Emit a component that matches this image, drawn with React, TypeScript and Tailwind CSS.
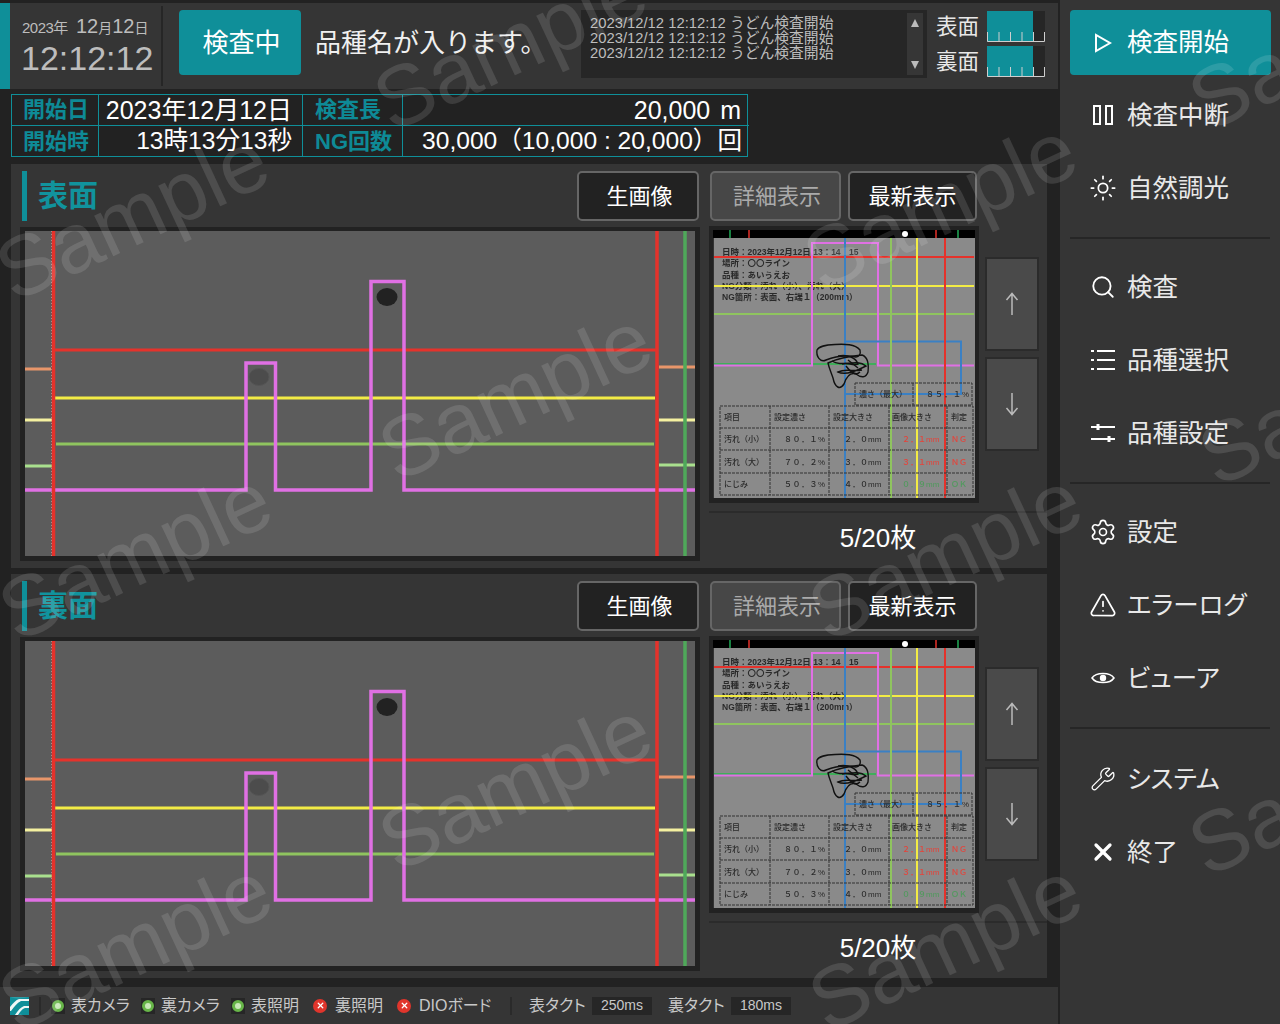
import React from 'react';
import { Sun, Search, Settings, TriangleAlert, Wrench, X } from 'lucide-react';

const watermarks = [
  'left-[132px] top-[215px]',
  'left-[510px] top-[45px]',
  'left-[940px] top-[205px]',
  'left-[515px] top-[395px]',
  'left-[1325px] top-[45px]',
  'left-[135px] top-[555px]',
  'left-[945px] top-[555px]',
  'left-[1335px] top-[400px]',
  'left-[515px] top-[785px]',
  'left-[135px] top-[945px]',
  'left-[945px] top-[945px]',
  'left-[1325px] top-[790px]',
];

const logLines = ['2023/12/12 12:12:12 うどん検査開始', '2023/12/12 12:12:12 うどん検査開始', '2023/12/12 12:12:12 うどん検査開始'];

const Gauge: React.FC<{ label: string }> = ({ label }) => (
  <div className="flex items-center h-[31px]">
    <span className="w-[51px] pt-[3px] text-[21.5px] text-[#e8e8e8] leading-none">{label}</span>
    <div className="relative w-[58px] h-[31px] bg-[#262626]">
      <div className="w-[46px] h-full bg-[#0f8f99]" />
      <svg className="absolute left-0 top-0" width="58" height="31" viewBox="0 0 58 31">
        <path d="M.5 21V30.5H57.5V21M12 21V30M23.5 21V30M35 21V30M46.5 21V30" fill="none" stroke="#cfcfcf" strokeWidth="1" />
      </svg>
    </div>
  </div>
);

const Chart = () => (
  <svg width="670" height="325" viewBox="25 231 670 325" className="bg-[#5c5c5c]">
    <ellipse cx="259" cy="377" rx="10" ry="8.5" fill="#4c4c4c" stroke="#555" />
    <ellipse cx="387" cy="297" rx="10.5" ry="9" fill="#222" />
    <path d="M51.5 231V556" stroke="#9aa" strokeWidth="1" strokeDasharray="1 2" />
    <g fill="none" strokeWidth="3">
      <path d="M55 350H656" stroke="#e5322b" />
      <path d="M55 398H655" stroke="#f3ec45" />
      <path d="M56 444H654" stroke="#8fc45f" />
      <path d="M25 369H51M659 367H695" stroke="#e8966a" />
      <path d="M25 420H52M659 420H695" stroke="#f4f0a0" />
      <path d="M25 466H52M659 465H695" stroke="#a9e08e" />
    </g>
    <path d="M25 490H246V363H275.5V490H371V281.5H404V490H695" fill="none" stroke="#e070e4" strokeWidth="3.5" />
    <path d="M53.5 231V556M657 231V556" stroke="#e5322b" strokeWidth="3.5" />
    <path d="M685 231V556" stroke="#4fa85a" strokeWidth="3.5" />
  </svg>
);

const Thumb = () => (
  <div className="w-[270px] h-[277px] bg-[#222] p-[4px]">
    <svg width="262" height="268" viewBox="713 230 262 268" className="bg-[#8a8a8a] blur-[0.35px]">
      <rect x="713" y="230" width="262" height="8" fill="#000" />
      <rect x="713" y="238" width="1" height="260" fill="#333" />
      <path d="M730 230V238M958 230V238" stroke="#1faa55" strokeWidth="1.5" />
      <path d="M749 230V238M936 230V238" stroke="#e5322b" strokeWidth="1.5" />
      <circle cx="905" cy="234" r="3" fill="#fff" />
      <g fontSize="8.5" fill="#2a2a2a" fontWeight="700">
        <text x="722" y="255">日時：2023年12月12日 13：14：15</text>
        <text x="722" y="266">場所：〇〇ライン</text>
        <text x="722" y="278">品種：あいうえお</text>
        <text x="722" y="289">NG分類：汚れ（小）、汚れ（大）</text>
        <text x="722" y="300">NG箇所：表面、右端１（200mm）</text>
      </g>
      <g fill="none" strokeWidth="2">
        <path d="M714 257H974" stroke="#e5322b" />
        <path d="M714 286H974" stroke="#f3ec45" />
        <path d="M714 314H974" stroke="#8fc45f" />
        <path d="M714 364H876" stroke="#3fae5a" />
        <path d="M714 365.5H812V243H878V365.5H974" stroke="#e070e4" />
        <path d="M845 238V498M845 341.5H961V394H845" stroke="#3a80c4" />
        <path d="M891 238V498" stroke="#8fc45f" />
        <path d="M917 238V498" stroke="#f3ec45" />
        <path d="M945 238V498" stroke="#e5322b" />
      </g>
      <g fill="none" stroke="#111" strokeWidth="1.4">
        <path d="M817 350C819 346 825 345 835 344.5C845 344 855 344 860 350C861 354 859 357 856 357C846 355 836 356 826 360C820 363 816 356 817 350Z" />
        <path d="M828 363C836 359 850 356 862 355C868 357 869 363 868 372C866 378 861 378 856 374C850 372 846 378 844 384C840 390 835 388 833 378C831 372 829 368 828 363Z" />
        <path d="M832 361C842 368 856 358 866 366C858 370 846 376 838 372C846 368 852 372 862 370" />
        <path d="M838 356C848 354 856 358 858 364C852 366 848 362 842 364" />
        <path d="M846 366C850 372 856 376 860 372M848 360L858 368" />
      </g>
      <g fill="none" stroke="#333" strokeWidth="1" strokeDasharray="3 1">
        <path d="M855 383H972V405H855ZM913 383V405" />
        <path d="M720 406H973V495H720ZM770 406V495M829 406V495M889 406V495M947 406V495M720 428H973M720 450H973M720 473H973" />
      </g>
      <g fontSize="8" fill="#2a2a2a" fontWeight="500">
        <text x="859" y="397">濃さ（最大）</text>
        <text x="926" y="397" letterSpacing="1">８５．１%</text>
        <text x="724" y="420">項目</text>
        <text x="774" y="420">設定濃さ</text>
        <text x="833" y="420">設定大きさ</text>
        <text x="892" y="420">画像大きさ</text>
        <text x="951" y="420">判定</text>
        <text x="724" y="442">汚れ（小）</text>
        <text x="724" y="465">汚れ（大）</text>
        <text x="724" y="487">にじみ</text>
        <text x="784" y="442" letterSpacing="0.5">８０．１%</text>
        <text x="784" y="465" letterSpacing="0.5">７０．２%</text>
        <text x="784" y="487" letterSpacing="0.5">５０．３%</text>
        <text x="844" y="442">２．０mm</text>
        <text x="844" y="465">３．０mm</text>
        <text x="844" y="487">４．０mm</text>
      </g>
      <g fontSize="8" fill="#e5433a" fontWeight="500">
        <text x="902" y="442">２．１mm</text>
        <text x="902" y="465">３．１mm</text>
        <text x="951" y="442">ＮＧ</text>
        <text x="951" y="465">ＮＧ</text>
      </g>
      <g fontSize="8" fill="#4f9a5c" fontWeight="500">
        <text x="902" y="487">０．９mm</text>
        <text x="951" y="487">ＯＫ</text>
      </g>
    </svg>
  </div>
);

const PanelButton: React.FC<{ label: string; className: string }> = ({ label, className }) => (
  <button className={`h-[50px] rounded-[5px] border-2 border-[#666] text-[22px] ${className}`}>{label}</button>
);

const Panel: React.FC<{ title: string; className?: string }> = ({ title, className }) => (
  <section className={`flex w-[1036px] h-[404px] bg-[#353535] ${className ?? ''}`}>
    <div className="w-[689px] pl-[9px] pt-[7px]">
      <div className="flex items-center justify-between h-[50px] pl-[2px] pr-[1px]">
        <div className="flex items-center h-full">
          <div className="w-[5px] h-full bg-[#0f8f99]" />
          <h2 className="ml-[11px] text-[30px] font-bold text-[#11939d] leading-none">{title}</h2>
        </div>
        <PanelButton label="生画像" className="w-[122px] pl-[3px] bg-[#222] text-white" />
      </div>
      <div className="mt-[6px] w-[680px] h-[334px] bg-[#222] pl-[5px] pt-[4px]">
        <Chart />
      </div>
    </div>
    <div className="w-[347px] pl-[9px] pt-[7px]">
      <div className="flex gap-[7px] pl-[1px]">
        <PanelButton label="詳細表示" className="w-[131px] pl-[3px] bg-[#474747] text-[#aaa]" />
        <PanelButton label="最新表示" className="w-[129px] bg-[#222] text-white" />
      </div>
      <div className="flex mt-[5px]">
        <Thumb />
        <div className="flex flex-col gap-[6px] ml-[6px] pt-[31px]">
          <button className="flex items-center justify-center w-[54px] h-[94px] bg-[#4a4a4a] border-2 border-[#2b2b2b] text-[#bbb]">
            <svg width="14" height="24" viewBox="0 0 14 24" fill="none" stroke="currentColor" strokeWidth="1.5"><path d="M7 23V2M1.5 8L7 1.5 12.5 8" /></svg>
          </button>
          <button className="flex items-center justify-center w-[54px] h-[94px] bg-[#4a4a4a] border-2 border-[#2b2b2b] text-[#bbb]">
            <svg width="14" height="24" viewBox="0 0 14 24" fill="none" stroke="currentColor" strokeWidth="1.5"><path d="M7 1V22M1.5 16L7 22.5 12.5 16" /></svg>
          </button>
        </div>
      </div>
      <div className="mt-[8px] h-[2px] bg-[#2b2b2b]" />
      <div className="mt-[11px] text-center text-[26px] leading-[28px] text-white">5/20枚</div>
    </div>
  </section>
);

const statuses = [
  { label: '表カメラ', ok: true, className: 'w-[90px]' },
  { label: '裏カメラ', ok: true, className: 'w-[90px]' },
  { label: '表照明', ok: true, className: 'w-[82px]' },
  { label: '裏照明', ok: false, className: 'w-[84px]' },
  { label: 'DIOボード', ok: false, className: 'w-[95px]' },
];

const StatusItem: React.FC<{ label: string; ok: boolean; className: string }> = ({ label, ok, className }) => (
  <div className={`flex items-center ${className}`}>
    {ok ? (
      <span className="flex items-center justify-center w-[14px] h-[16px] bg-[#262626]">
        <span className="w-[12px] h-[12px] rounded-full border-[3px] border-[#67b548] bg-[#c9e8b8]" />
      </span>
    ) : (
      <span className="flex items-center justify-center w-[14px] h-[14px] rounded-full bg-[#e0352c]">
        <X size={9} strokeWidth={3.5} className="text-white" />
      </span>
    )}
    <span className={`${ok ? 'ml-[6px]' : 'ml-[8px]'} text-[16px] text-[#c8c8c8] leading-none whitespace-nowrap [font-feature-settings:'palt']`}>{label}</span>
  </div>
);

const ListIcon = () => (
  <svg width="24" height="20" viewBox="0 0 24 20" fill="none" stroke="currentColor" strokeWidth="2">
    <path d="M6 1H24M6 10H24M6 19H24M0 1H3M0 10H3M0 19H3" />
  </svg>
);

const SlidersIcon = () => (
  <svg width="24" height="24" viewBox="0 0 24 24" fill="currentColor" stroke="currentColor" strokeWidth="2">
    <path d="M0 6H24M0 18H24" fill="none" />
    <rect x="6" y="3.5" width="2" height="5" strokeWidth="1" />
    <rect x="17" y="15.5" width="2" height="5" strokeWidth="1" />
  </svg>
);

const EyeIcon = () => (
  <svg width="24" height="24" viewBox="0 0 24 24" fill="none" stroke="currentColor" strokeWidth="1.5">
    <path d="M1 12C5 6 19 6 23 12C19 18 5 18 1 12Z" />
    <circle cx="12" cy="12" r="3.2" fill="currentColor" stroke="none" />
  </svg>
);

const menuGroups: { label: string; icon: React.ReactNode; kana?: boolean }[][] = [
  [
    {
      label: '検査中断',
      icon: (
        <svg width="20" height="20" viewBox="0 0 20 20" fill="none" stroke="currentColor" strokeWidth="2"><path d="M1 1H7V19H1ZM13 1H19V19H13Z" /></svg>
      ),
    },
    { label: '自然調光', icon: <Sun size={28} strokeWidth={1.5} /> },
  ],
  [
    { label: '検査', icon: <Search size={26} strokeWidth={1.7} /> },
    { label: '品種選択', icon: <ListIcon /> },
    { label: '品種設定', icon: <SlidersIcon /> },
  ],
  [
    { label: '設定', icon: <Settings size={28} strokeWidth={1.4} /> },
    { label: 'エラーログ', icon: <TriangleAlert size={28} strokeWidth={1.5} />, kana: true },
    { label: 'ビューア', icon: <EyeIcon />, kana: true },
  ],
  [
    { label: 'システム', icon: <Wrench size={26} strokeWidth={1.2} />, kana: true },
    { label: '終了', icon: <X size={28} strokeWidth={2.8} /> },
  ],
];

const MenuRow: React.FC<{ label: string; icon: React.ReactNode; kana?: boolean }> = ({ label, icon, kana }) => (
  <div className="flex items-center h-[73px] text-[#e8e8e8]">
    <div className="flex items-center justify-center w-[66px] h-[34px] text-white">{icon}</div>
    <span className={`-ml-[9px] pt-[1px] text-[25.5px] leading-none ${kana ? "[font-feature-settings:'palt']" : ''}`}>{label}</span>
  </div>
);

export default function App() {
  return (
    <div className="relative flex w-[1280px] h-[1024px] overflow-hidden bg-[#222] font-[family-name:'Liberation_Sans','Noto_Sans_CJK_JP',sans-serif]">
      <main className="w-[1060px] pt-[3px]">
        {/* Header */}
        <header className="flex items-start w-[1058px] h-[86px] bg-[#353535] border-l-[10px] border-[#0f8f99]">
          <div className="w-[153px] h-[80px] mt-[3px] border-r-2 border-[#262626] pl-[12px] pt-[10px] text-[#bdbdbd]">
            <div className="flex items-baseline h-[24px] leading-none">
              <span className="text-[15px] tracking-[-0.5px]">2023年</span>
              <span className="ml-[8px] text-[20px]">12</span>
              <span className="text-[14px]">月</span>
              <span className="text-[20px]">12</span>
              <span className="text-[14px]">日</span>
            </div>
            <div className="text-[34px] leading-[40px] -ml-[1px] -mt-[2px]">12:12:12</div>
          </div>
          <div className="flex items-center justify-center ml-[16px] mt-[7px] w-[122px] h-[65px] pl-[3px] pt-[2px] rounded-[4px] bg-[#0f8f99] text-[26px] text-white">検査中</div>
          <div className="flex items-center ml-[14px] mt-[7px] w-[266px] h-[65px] pt-[1px] text-[26px] text-[#f0f0f0] leading-none">品種名が入ります。</div>
          <div className="flex w-[346px] h-[68px] mt-[7px] bg-[#262626] pl-[9px]">
            <div className="w-[317px] pt-[6px] text-[14.8px] leading-[15px] text-[#bdbdbd] whitespace-nowrap">
              {logLines.map((line, i) => (
                <div key={i}>{line}</div>
              ))}
            </div>
            <div className="flex flex-col items-center justify-between w-[16px] h-[62px] mt-[3px] py-[6px] bg-[#363636]">
              <svg width="8" height="8" viewBox="0 0 8 8" fill="#bbb"><path d="M4 0L8 8H0Z" /></svg>
              <svg width="8" height="8" viewBox="0 0 8 8" fill="#bbb"><path d="M4 8L8 0H0Z" /></svg>
            </div>
          </div>
          <div className="flex flex-col gap-[4px] ml-[9px] mt-[8px]">
            <Gauge label="表面" />
            <Gauge label="裏面" />
          </div>
        </header>

        {/* Info table */}
        <div className="grid grid-cols-[87px_204px_100px_346px] grid-rows-[31px_31px] w-[737px] h-[63px] ml-[11px] mt-[5px] border border-[#0f8f99] text-[24.6px] text-white leading-none">
          <div className="flex items-center pl-[11px] border-r border-b border-[#0f8f99] text-[22px] font-bold text-[#0e8a96]">開始日</div>
          <div className="flex items-center justify-end border-r border-b border-[#0f8f99] pr-[10px] text-[25px]">2023年12月12日</div>
          <div className="flex items-center pl-[12px] border-r border-b border-[#0f8f99] text-[22px] font-bold text-[#0e8a96]">検査長</div>
          <div className="flex items-center justify-end border-b border-[#0f8f99] pr-[8px] text-[25px] [word-spacing:3px]">20,000 m</div>
          <div className="flex items-center pl-[11px] border-r border-[#0f8f99] text-[22px] font-bold text-[#0e8a96]">開始時</div>
          <div className="flex items-center justify-end border-r border-[#0f8f99] pr-[10px]">13時13分13秒</div>
          <div className="flex items-center pl-[12px] border-r border-[#0f8f99] text-[22px] font-bold text-[#0e8a96]">NG回数</div>
          <div className="flex items-center justify-end pr-[7px]">30,000（10,000 : 20,000）回</div>
        </div>

        <Panel title="表面" className="ml-[11px] mt-[7px]" />
        <Panel title="裏面" className="ml-[11px] mt-[6px]" />

        {/* Status bar */}
        <footer className="flex items-center w-[1058px] h-[37px] mt-[9px] bg-[#353535] pl-[10px]">
          <svg width="19" height="18" viewBox="0 0 19 18">
            <rect width="19" height="18" fill="#0f8f99" />
            <path d="M0 10C3 6 6 3 9 2H19V4H11C7 6 4 10 1 14H0ZM5 18C8 13 11 10 14 9H19V11H15C12 12 10 15 8 18Z" fill="#eef7f7" />
          </svg>
          <div className="ml-[10px] w-[2px] h-[18px] bg-[#2a2a2a]" />
          <div className="flex ml-[10px]">
            {statuses.map(s => (
              <StatusItem key={s.label} label={s.label} ok={s.ok} className={s.className} />
            ))}
          </div>
          <div className="ml-[18px] w-[2px] h-[18px] bg-[#2a2a2a]" />
          <span className="ml-[17px] w-[56px] text-[16px] leading-none text-[#c8c8c8] whitespace-nowrap [font-feature-settings:'palt']">表タクト</span>
          <span className="ml-[7px] flex items-center justify-center w-[60px] h-[18px] bg-[#262626] text-[14px] text-[#c8c8c8]">250ms</span>
          <span className="ml-[16px] w-[56px] text-[16px] leading-none text-[#c8c8c8] whitespace-nowrap [font-feature-settings:'palt']">裏タクト</span>
          <span className="ml-[7px] flex items-center justify-center w-[60px] h-[18px] bg-[#262626] text-[14px] text-[#c8c8c8]">180ms</span>
        </footer>
      </main>

      {/* Side menu */}
      <aside className="w-[220px] h-full bg-[#353535] px-[10px] pt-[10px]">
        <div className="flex items-center w-[201px] h-[65px] rounded-[4px] bg-[#0f8f99] text-white">
          <div className="flex items-center justify-center w-[66px]">
            <svg width="18" height="20" viewBox="0 0 18 20" fill="none" stroke="currentColor" strokeWidth="2"><path d="M2 2V18L16 10Z" /></svg>
          </div>
          <span className="-ml-[9px] pt-[1px] text-[25.5px] leading-none">検査開始</span>
        </div>
        <div className="h-[3.5px]" />
        {menuGroups.map((group, i) => (
          <div key={i}>
            {i > 0 && <div className={`h-[2px] w-[200px] bg-[#262626] ${i === 3 ? 'mt-[12px] mb-[14px]' : 'my-[12px]'}`} />}
            {group.map(item => (
              <MenuRow key={item.label} label={item.label} icon={item.icon} kana={item.kana} />
            ))}
          </div>
        ))}
      </aside>

      {/* Sample watermark */}
      {watermarks.map(pos => (
        <span
          key={pos}
          className={`absolute ${pos} -translate-x-1/2 -translate-y-1/2 rotate-[-25deg] text-[85px] leading-none text-white/[0.12] pointer-events-none select-none`}
        >
          Sample
        </span>
      ))}
    </div>
  );
}
